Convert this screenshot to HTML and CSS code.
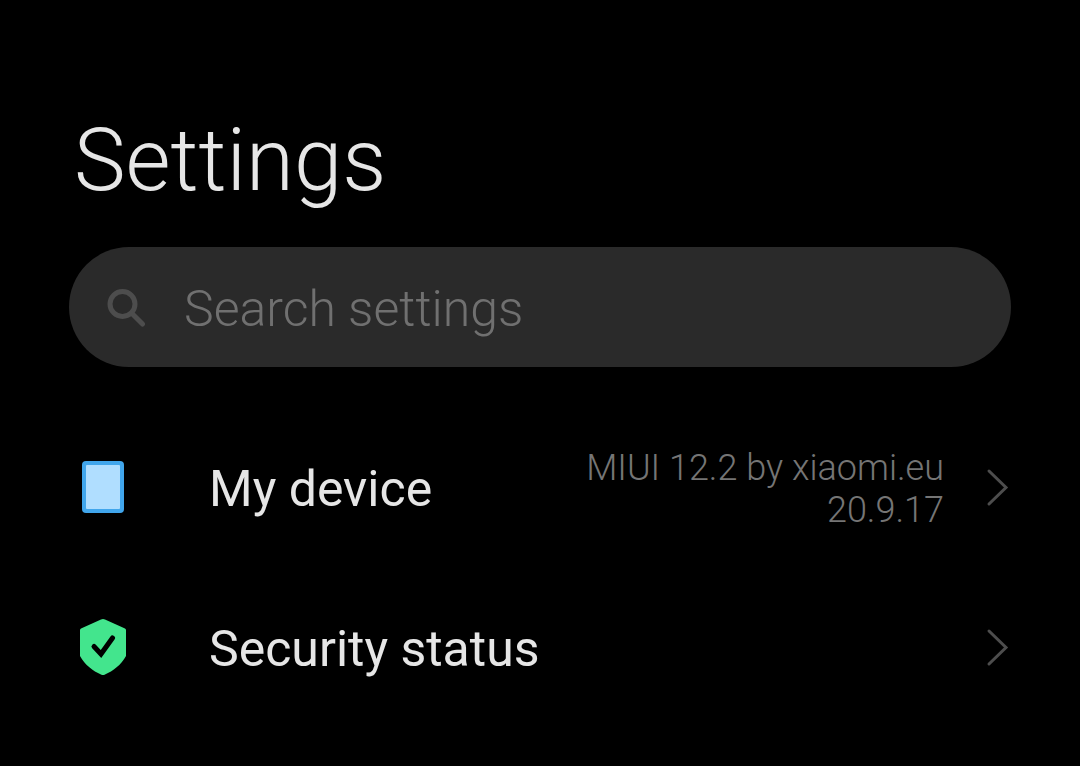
FILE: index.html
```
<!DOCTYPE html>
<html lang="en">
<head>
    <meta charset="UTF-8">
    <meta name="viewport" content="width=device-width, initial-scale=1.0">
    <title>Settings</title>
    <link rel="stylesheet" href="styles.css">
</head>
<body>

    <main class="container">
        <h1>Settings</h1>

        <!-- Search -->
        <label class="search" for="search">
            <svg class="search-icon" viewBox="0 0 40 40" aria-hidden="true">
                <circle cx="16.500" cy="17" r="12.500"/>
                <path d="M26 26.500L36.500 37"/>
            </svg>
            <input type="text" id="search" name="search" placeholder="Search settings" aria-label="Search settings">
        </label>

        <!-- Settings list -->
        <nav class="list">
            <a class="item" href="#device">
                <svg class="item-icon" viewBox="0 0 48 60" aria-hidden="true">
                    <rect x="3" y="4" width="42" height="52" rx="4" fill="#41a6ec"/>
                    <rect x="7" y="8" width="34" height="44" rx="1" fill="#b0deff"/>
                </svg>
                <span class="item-title">My device</span>
                <span class="item-value">MIUI 12.2 by xiaomi.eu 20.9.17</span>
                <svg class="arrow" viewBox="0 0 24 40" aria-hidden="true">
                    <path d="M3 4L20 20.500L3 37"/>
                </svg>
            </a>
            <a class="item" href="#security">
                <svg class="item-icon" viewBox="0 0 48 60" aria-hidden="true">
                    <path d="M22 2.500Q24 1.500 26 2.500L46 11.500Q47 12 47 13V39C42 48 34 54 26 57.500Q24 58.500 22 57.500C14 54 6 48 1 39V13Q1 12 2 11.500Z" fill="#43e58d"/>
                    <path d="M15 29.500L22 37L33.500 21" fill="none" stroke="#000" stroke-width="5" stroke-linecap="round"/>
                </svg>
                <span class="item-title">Security status</span>
                <svg class="arrow" viewBox="0 0 24 40" aria-hidden="true">
                    <path d="M3 4L20 20.500L3 37"/>
                </svg>
            </a>
        </nav>
    </main>

</body>
</html>
```
FILE: styles.css
```
body {
    font-family: Roboto, sans-serif;
    background-color: #000;
    color: #e6e6e6;
    margin: 0;
}

.container {
    padding: 108px 69px 0;
}

h1 {
    margin: 0 0 35px 5px;
    font-size: 87px;
    line-height: 104px;
    font-weight: 300;
}

.search {
    display: flex;
    align-items: center;
    gap: 38px;
    height: 120px;
    padding: 0 37px;
    border-radius: 60px;
    background-color: #2a2a2a;
}

.search-icon {
    flex: none;
    width: 40px;
    height: 40px;
    fill: none;
    stroke: #4d4d4d;
    stroke-width: 5;
    stroke-linecap: round;
}

.search input {
    flex: 1;
    min-width: 0;
    padding: 4px 0 0;
    border: none;
    outline: none;
    background: none;
    color: #e6e6e6;
    font-family: inherit;
    font-size: 50px;
    font-weight: 300;
}

.search input::placeholder {
    color: #707070;
}

.list {
    margin-top: 40px;
}

.item {
    display: flex;
    align-items: center;
    height: 160px;
    padding: 0 1px 0 10px;
    color: inherit;
    text-decoration: none;
}

.item-icon {
    flex: none;
    width: 48px;
    height: 60px;
    margin-right: 82px;
}

.item-title {
    padding-top: 4px;
    font-size: 50px;
    line-height: 60px;
    font-weight: 400;
}

.item-value {
    width: 370px;
    margin-left: auto;
    padding-top: 4px;
    color: #757575;
    font-size: 36px;
    line-height: 42px;
    font-weight: 300;
    text-align: right;
}

.arrow {
    flex: none;
    width: 24px;
    height: 40px;
    margin-left: 42px;
    fill: none;
    stroke: #4d4d4d;
    stroke-width: 3;
    stroke-linecap: round;
}

.item-title + .arrow {
    margin-left: auto;
}
```
